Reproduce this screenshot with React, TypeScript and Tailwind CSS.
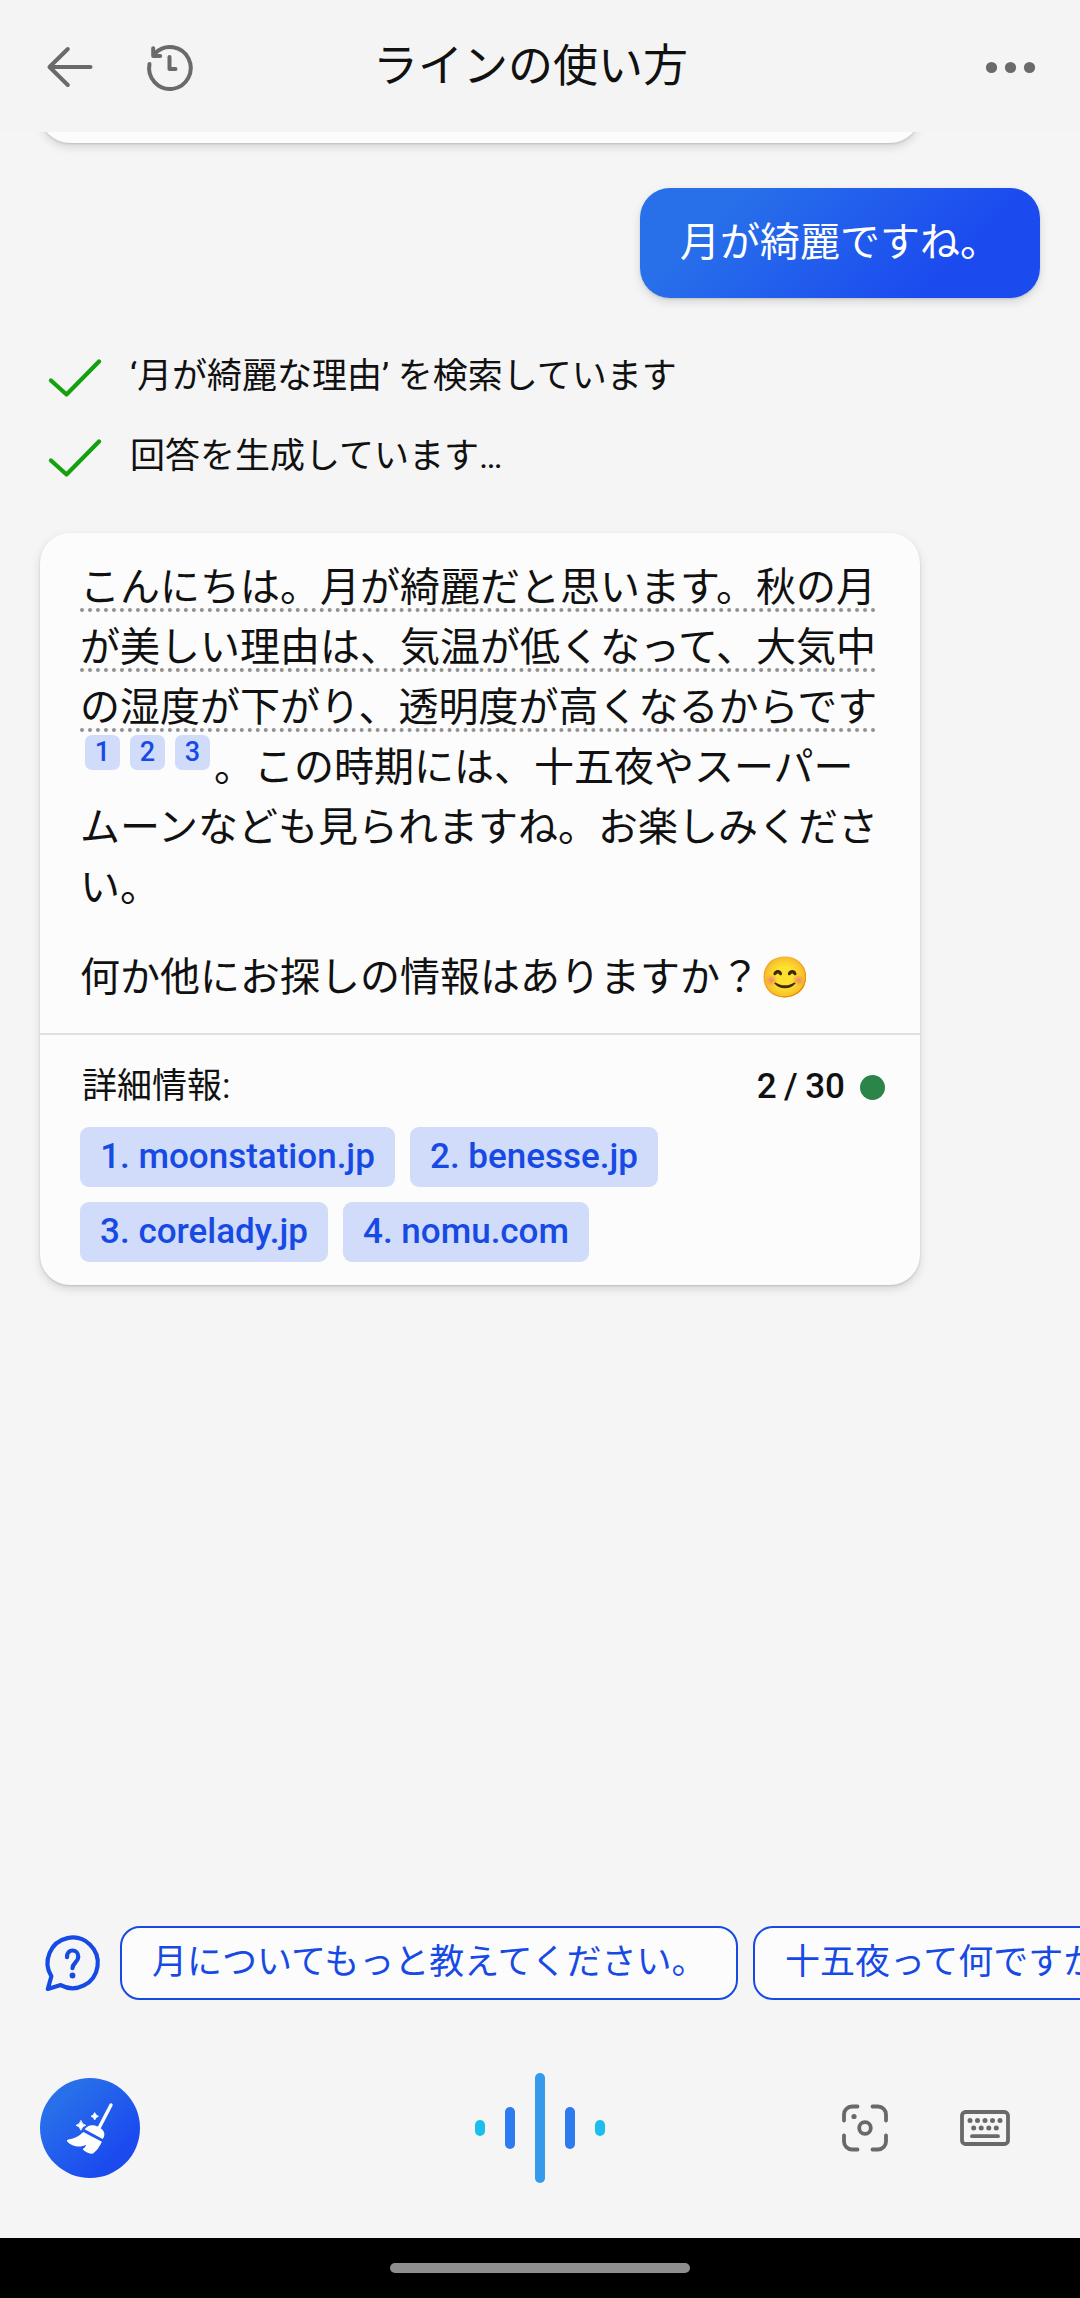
import type { ReactNode } from "react";

const jp = "font-['Noto_Sans_CJK_JP',sans-serif]";
const roboto = "font-['Roboto','Noto_Sans_CJK_JP',sans-serif]";

function Header() {
  return (
    <header className="relative z-10 flex h-[132px] shrink-0 items-center bg-[#f4f4f4] pr-[42px] pl-[40px] text-[#6a6a6a]">
      <svg className="size-[60px]" viewBox="0 0 60 60" fill="none" stroke="currentColor" strokeWidth="4" strokeLinecap="round" strokeLinejoin="round">
        <path d="M50.5 31H10M27.8 13 9.5 31l18.300 18" />
      </svg>
      <svg className="ml-[40px] size-[60px]" viewBox="0 0 60 60" fill="none" stroke="currentColor" strokeWidth="4" strokeLinecap="round" strokeLinejoin="round">
        <path d="M9.500 28A20.800 21 0 1 0 15.200 17.200" />
        <path d="M13.200 12.200v7.800h7M29.500 21v12h6" />
      </svg>
      <h1 className={`${jp} ml-[173px] flex-1 text-[45px] leading-[60px] tracking-normal whitespace-nowrap text-[#111]`}>
        <span className="relative -top-[3px]">ラインの使い方</span>
      </h1>
      <svg className="h-[60px] w-[60px]" viewBox="0 0 60 60" fill="currentColor">
        <circle cx="13.500" cy="31.500" r="5.600" />
        <circle cx="32.500" cy="31.500" r="5.600" />
        <circle cx="51.500" cy="31.500" r="5.600" />
      </svg>
    </header>
  );
}

function Status({ children }: { children: ReactNode }) {
  return (
    <div className="flex h-[80px] items-center">
      <svg className="h-[40px] w-[56px]" viewBox="0 0 56 40" fill="none" stroke="#13a10e" strokeWidth="4.200" strokeLinecap="round" strokeLinejoin="round">
        <path d="M4 23.500 19.500 37.500 52 4.500" />
      </svg>
      <p className={`${roboto} ml-[27px] text-[35px] leading-[60px] whitespace-nowrap text-[#111]`}>{children}</p>
    </div>
  );
}

function CitedLine({ children }: { children: string }) {
  return (
    <span className="mb-[2px] block h-[58px] w-[796px] border-b-4 border-dotted border-[#919191] whitespace-nowrap">{children}</span>
  );
}

function Cite({ n }: { n: number }) {
  return (
    <sup className={`${roboto} mt-[1px] flex size-[35px] justify-center rounded-[7px] bg-[#d1dbfa] text-[27px] leading-[34px] font-medium text-[#174ae4] static`}>
      {n}
    </sup>
  );
}

function Source({ label, width }: { label: string; width: string }) {
  return (
    <a className={`${roboto} ${width} flex h-[60px] items-center justify-center rounded-[9px] bg-[#d1dbfa] text-[35px] leading-[60px] font-medium whitespace-nowrap text-[#174ae4]`}>
      {label}
    </a>
  );
}

function Answer() {
  return (
    <article className="h-[752px] w-[880px] shrink-0 rounded-[30px] bg-[#fcfcfc] text-[#111] shadow-[0_1px_2px_rgba(0,0,0,0.14),0_4px_10px_rgba(0,0,0,0.13)]">
      <div className={`${jp} h-[500px] pt-[21px] pl-[40px] text-[40px] leading-[60px] whitespace-nowrap`}>
        <CitedLine>こんにちは。月が綺麗だと思います。秋の月</CitedLine>
        <CitedLine>が美しい理由は、気温が低くなって、大気中</CitedLine>
        <CitedLine>の湿度が下がり、透明度が高くなるからです</CitedLine>
        <div className="flex h-[60px] gap-[10px] pl-[5px]">
          <Cite n={1} />
          <Cite n={2} />
          <Cite n={3} />
          <span className="-ml-[6px]">。この時期には、十五夜やスーパー</span>
        </div>
        <div>ムーンなども見られますね。お楽しみくださ</div>
        <div>い。</div>
        <div className="mt-[30px]">何か他にお探しの情報はありますか？😊</div>
      </div>
      <div className="h-[2px] bg-[#e0e0e0]" />
      <div className="flex h-[92px] items-center pt-[12px] pr-[35px] pl-[42px]">
        <span className={`${roboto} flex-1 text-[35px] leading-[60px]`}>詳細情報:</span>
        <span className={`${roboto} text-[35px] leading-[60px] font-medium [word-spacing:-1.2px]`}>2 / 30</span>
        <span className="mt-[1px] ml-[15px] size-[25px] rounded-full bg-[#2b8549]" />
      </div>
      <div className="flex flex-wrap gap-[15px] pl-[40px]">
        <Source label="1. moonstation.jp" width="w-[315px]" />
        <Source label="2. benesse.jp" width="w-[248px]" />
        <span className="w-[150px]" />
        <Source label="3. corelady.jp" width="w-[248px]" />
        <Source label="4. nomu.com" width="w-[246px]" />
      </div>
    </article>
  );
}

function Suggestions() {
  return (
    <div className="flex h-[74px] shrink-0 items-center overflow-hidden pl-[40px] text-[#174ae4]">
      <svg className="mr-[15px] size-[65px] shrink-0" viewBox="0 0 65 65" fill="none" stroke="currentColor" strokeWidth="4.200" strokeLinecap="round" strokeLinejoin="round">
        <path d="M20.700 54.100A25.100 25.300 0 1 0 11.400 45.300L7.800 58Z" />
        <path d="M27 26.200c0-4.400 2.500-6.700 5.500-6.700s5.800 2.400 5.800 6.200c0 5.500-5.800 6-5.800 11.500" />
        <circle cx="32.500" cy="44.500" r="2.900" fill="currentColor" stroke="none" />
      </svg>
      <button className={`${jp} mr-[15px] h-[74px] w-[618px] shrink-0 rounded-[20px] border-2 border-[#174ae4] bg-[#fcfcfc] pl-[30px] text-left text-[35px] leading-[66px] whitespace-nowrap`}>
        <span className="relative -top-[4px]">月についてもっと教えてください。</span>
      </button>
      <button className={`${jp} h-[74px] w-[420px] shrink-0 rounded-[20px] border-2 border-[#174ae4] bg-[#fcfcfc] pl-[30px] text-left text-[35px] leading-[66px] whitespace-nowrap`}>
        <span className="relative -top-[4px]">十五夜って何ですか？</span>
      </button>
    </div>
  );
}

function Toolbar() {
  return (
    <div className="flex h-[110px] shrink-0 items-center justify-between pr-[65px] pl-[40px]">
      <div className="w-[325px]">
        <div className="size-[100px] rounded-full bg-[linear-gradient(136deg,#2870ea_20%,#1b4aef_77.5%)]">
          <svg className="size-[100px]" viewBox="0 0 100 100" fill="#fff">
            <path d="M71 27 59 50" stroke="#fff" strokeWidth="3.400" strokeLinecap="round" />
            <path d="M44.700 51.300C48 47 52 46.200 58 48.700 63.500 51 66.500 56 62.600 61Z" />
            <path d="M43.300 54 61.900 63.700C59.500 69 56 73.500 53 75.500 49.500 76.500 45.500 74 42.600 71.300 44.500 70 45.500 68.500 46.300 66.700 41 69.500 32.500 69.500 27.100 63.500 26.700 62.300 27.300 61.600 28.500 61.500 35 60.500 38.500 58.500 43.300 54Z" />
            <path d="M40.900 42.400Q41.900 46.300 45.800 47.300 41.900 48.300 40.900 52.200 39.900 48.300 36 47.300 39.900 46.300 40.900 42.400ZM54.700 34.600Q55.500 37.500 58.400 38.300 55.500 39.100 54.700 42 53.900 39.100 51 38.300 53.900 37.500 54.700 34.600Z" stroke="#fff" strokeWidth="0.800" />
          </svg>
        </div>
      </div>
      <div className="flex items-center gap-[20px]">
        <i className="h-[16px] w-[10px] rounded-full bg-[#1cbeee]" />
        <i className="h-[42px] w-[10px] rounded-full bg-[#2d7bee]" />
        <i className="h-[110px] w-[10px] rounded-full bg-[#3599ec]" />
        <i className="h-[42px] w-[10px] rounded-full bg-[#2d7bee]" />
        <i className="h-[16px] w-[10px] rounded-full bg-[#1cbeee]" />
      </div>
      <div className="flex w-[300px] justify-end gap-[60px]">
        <svg className="size-[60px]" viewBox="0 0 60 60" fill="none" stroke="#696969" strokeWidth="3.800" strokeLinecap="round">
          <path d="M9 22.500v-6a8 8 0 0 1 8-8h5.500M37.500 8.500H43a8 8 0 0 1 8 8v6M51 37.500v6a8 8 0 0 1-8 8h-5.500M22.500 51.500H17a8 8 0 0 1-8-8v-6" />
          <circle cx="30" cy="30" r="5.800" />
          <circle cx="19" cy="18.500" r="2.600" fill="#696969" stroke="none" />
        </svg>
        <svg className="size-[60px]" viewBox="0 0 60 60" fill="none" stroke="#696969" strokeWidth="3.800" strokeLinecap="round">
          <rect x="7" y="14" width="46" height="32" rx="3.500" />
          <path d="M17 38.200h26" />
          <g fill="#696969" stroke="none">
            {[15, 22.500, 30, 37.500, 45].map((x) => (
              <circle key={x} cx={x} cy="22.500" r="2.500" />
            ))}
            {[18.700, 26.200, 33.800, 41.300].map((x) => (
              <circle key={x} cx={x} cy="30" r="2.500" />
            ))}
          </g>
        </svg>
      </div>
    </div>
  );
}

export default function App() {
  return (
    <div className="flex h-[2298px] w-[1080px] flex-col overflow-hidden bg-[#f5f5f5]">
      <Header />
      <main className="flex h-[1794px] shrink-0 flex-col overflow-hidden px-[40px]">
        <div className="-mt-[49px] h-[60px] w-[880px] shrink-0 rounded-[30px] bg-[#fcfcfc] shadow-[0_1px_2px_rgba(0,0,0,0.14),0_4px_10px_rgba(0,0,0,0.13)]" />
        <div className={`${jp} mt-[45px] h-[110px] w-[400px] shrink-0 self-end rounded-[30px] bg-[linear-gradient(136deg,#2870ea_20%,#1b4aef_77.5%)] pl-[40px] text-[40px] leading-[102px] whitespace-nowrap text-white shadow-[0_1px_2px_rgba(0,0,0,0.12),0_4px_10px_rgba(0,0,0,0.13)]`}>
          月が綺麗ですね。
        </div>
        <div className="mt-[39px] mb-[36px] pl-[7px]">
          <Status>‘月が綺麗な理由’ を検索しています</Status>
          <Status>回答を生成しています…</Status>
        </div>
        <Answer />
      </main>
      <Suggestions />
      <div className="h-[73px] shrink-0" />
      <Toolbar />
      <div className="mt-auto flex h-[60px] shrink-0 items-center justify-center bg-black">
        <div className="h-[10px] w-[300px] rounded-full bg-[#8e8e8e]" />
      </div>
    </div>
  );
}
